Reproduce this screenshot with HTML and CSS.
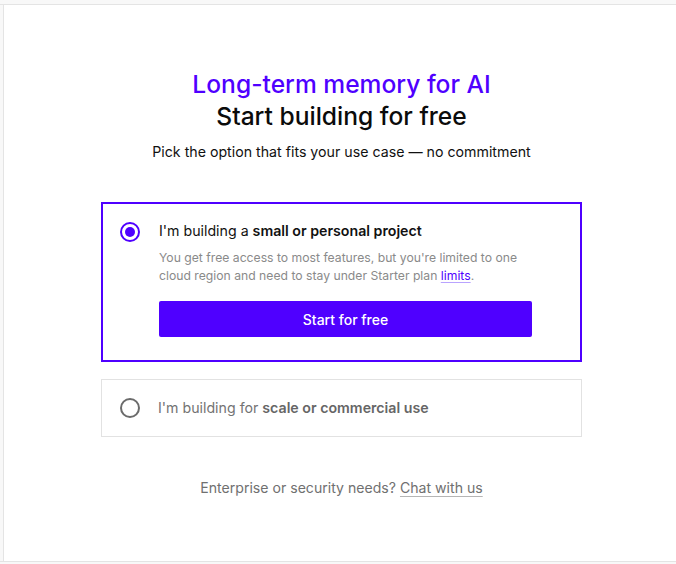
FILE: index.html
```html
<!DOCTYPE html>
<html lang="en">
<head>
<meta charset="utf-8">
<title>Start building for free</title>
<link rel="stylesheet" href="styles.css">
</head>
<body>
<div class="top-strip"></div>
<div class="frame">
  <div class="left-strip"></div>
  <main class="content">
    <div class="wrap">
      <h1 class="heading">
        <span class="accent">Long-term memory for AI</span>
        <span class="dark">Start building for free</span>
      </h1>
      <p class="subtitle">Pick the option that fits your use case — no commitment</p>

      <div class="card card-selected">
        <div class="radio radio-on"><span class="dot"></span></div>
        <div class="card-body">
          <div class="card-title">I'm building a <strong>small or personal project</strong></div>
          <p class="card-desc">You get free access to most features, but you're limited to one cloud region and need to stay under Starter plan <a class="link" href="#">limits</a>.</p>
          <button class="btn" type="button">Start for free</button>
        </div>
      </div>

      <div class="card card-plain">
        <div class="radio radio-off"></div>
        <div class="card-title muted">I'm building for <strong>scale or commercial use</strong></div>
      </div>

      <p class="footer">Enterprise or security needs? <a class="chat" href="#">Chat with us</a></p>
    </div>
  </main>
</div>
<div class="bottom-strip"></div>
</body>
</html>
```

FILE: styles.css
```css
* { box-sizing: border-box; }
html, body { margin: 0; padding: 0; }
body {
  background: #f8f8f8;
  font-family: Inter, "Noto Sans", "Liberation Sans", sans-serif;
  color: #111;
  height: 564px;
  overflow: hidden;
}
.top-strip {
  height: 5px;
  border-bottom: 1px solid #e4e4e4;
}
.frame {
  display: flex;
  height: 557px;
  border-bottom: 1px solid #e4e4e4;
}
.left-strip {
  width: 4px;
  border-right: 1px solid #e4e4e4;
  flex: none;
}
.content {
  flex: 1;
  background: #fff;
  padding: 63px 0 0 3px;
}
.wrap {
  width: 481px;
  margin: 0 auto;
}
.heading {
  margin: 0;
  text-align: center;
  font-size: 24.6px;
  line-height: 32px;
  font-weight: 500;
}
.heading span { display: block; }
.accent { color: #4f00ff; }
.dark { color: #0b0b0b; }
.subtitle {
  margin: 10px 0 0;
  text-align: center;
  font-size: 14.2px;
  line-height: 20px;
  color: #111;
}
.card {
  display: flex;
  align-items: flex-start;
  background: #fff;
}
.card-selected {
  margin-top: 40px;
  border: 2px solid #4f00ff;
  padding: 17px 48px 23px 17px;
}
.card-plain {
  margin-top: 17px;
  border: 1px solid #e2e2e2;
  padding: 18px 16px 18px 18px;
}
.radio {
  width: 20px;
  height: 20px;
  border-radius: 50%;
  flex: none;
  display: flex;
  align-items: center;
  justify-content: center;
  margin-top: 1px;
  margin-right: 19px;
}
.radio-on { border: 2.5px solid #4f00ff; }
.radio-on .dot {
  width: 10px;
  height: 10px;
  border-radius: 50%;
  background: #4f00ff;
}
.radio-off { border: 2px solid #6b6b6b; margin-top: 0; margin-right: 18px; }
.card-body { flex: 1; }
.card-title {
  font-size: 14.2px;
  line-height: 20px;
  color: #111;
}
.card-title strong { font-weight: 600; }
.card-title.muted { color: #737373; }
.card-title.muted strong { color: #666; }
.card-desc {
  margin: 8px 0 0;
  font-size: 12.2px;
  line-height: 18px;
  color: #8a8a8a;
}
.link {
  color: #4f00ff;
  text-decoration: underline;
  text-decoration-color: #b9a3ff;
  text-underline-offset: 2px;
}
.btn {
  display: block;
  width: 100%;
  margin-top: 16px;
  height: 36px;
  border: none;
  border-radius: 2px;
  background: #4f00ff;
  color: #fff;
  font-family: inherit;
  font-size: 14px;
  font-weight: 500;
}
.footer {
  margin: 41px 0 0;
  text-align: center;
  font-size: 14.1px;
  line-height: 20px;
  color: #707070;
}
.chat {
  color: #707070;
  text-decoration: underline;
  text-decoration-color: #b5b5b5;
  text-underline-offset: 3px;
}
.bottom-strip { height: 1px; }
```
